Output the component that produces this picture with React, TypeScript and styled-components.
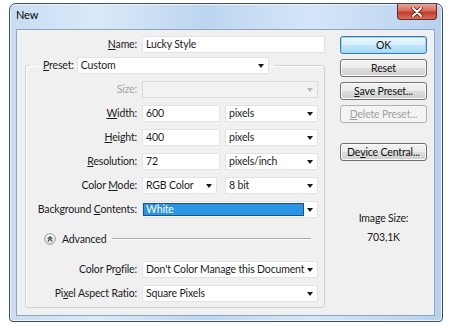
import React from 'react';
import styled, { createGlobalStyle } from 'styled-components';

const GlobalStyle = createGlobalStyle`
  html, body { margin: 0; padding: 0; background: #ffffff; }
  body {
    font-family: Lato, "Noto Sans", sans-serif;
    font-size: 10.5px;
    letter-spacing: -0.15px;
    color: #1b1b1b;
  }
`;

const Window = styled.div`
  margin: 3px 0 0 9px;
  width: 434px;
  height: 319px;
  box-sizing: border-box;
  border: 1px solid #3e4d5e;
  border-radius: 7px 7px 4px 4px;
  padding: 0 7px 5px 6px;
  display: flex;
  flex-direction: column;
  background: linear-gradient(90deg, #c8ddf2 0%, #d9e9f8 20%, #bcd6f0 45%, #d4e6f7 70%, #b6d1ee 100%);
  box-shadow: inset 0 0 0 1px #eef5fc;
`;

const TitleBar = styled.div`
  height: 25px;
  display: flex;
  align-items: flex-start;
  justify-content: space-between;
`;

const Title = styled.span`
  font-size: 11px;
  line-height: 22px;
  color: #000;
`;

const CloseButton = styled.div`
  width: 38px;
  height: 15px;
  margin-right: -2px;
  display: flex;
  align-items: center;
  justify-content: center;
  border: 1px solid #6e2a20;
  border-top: none;
  border-radius: 0 0 4px 4px;
  background: linear-gradient(180deg, #e9a597 0%, #d86c5a 45%, #c23b27 55%, #d3705c 100%);
`;

const Client = styled.div`
  flex: 1;
  display: flex;
  border: 1px solid #8ba6c2;
  background: #f0f0f0;
  padding-top: 6px;
`;

const LeftPanel = styled.div`
  width: 313px;
  display: flex;
  flex-direction: column;
`;

const NameRow = styled.div`
  display: grid;
  grid-template-columns: 120px 183px;
  column-gap: 5px;
  align-items: center;
`;

const Label = styled.label<{ $disabled?: boolean }>`
  text-align: right;
  white-space: nowrap;
  color: ${(p) => (p.$disabled ? '#a3a3a3' : '#1b1b1b')};
  line-height: 17px;
`;

const TextBox = styled.div`
  height: 17px;
  box-sizing: border-box;
  border: 1px solid #e2e3e5;
  background: #fff;
  padding: 0 3px;
  line-height: 15px;
  white-space: nowrap;
  overflow: hidden;
`;

const SelectBox = styled.div<{ $disabled?: boolean; $w?: number; $span?: boolean }>`
  position: relative;
  height: 17px;
  box-sizing: border-box;
  border: 1px solid ${(p) => (p.$disabled ? '#dadada' : '#e2e3e5')};
  background: ${(p) => (p.$disabled ? '#f3f3f3' : '#fff')};
  padding: 0 13px 0 3px;
  line-height: 15px;
  white-space: nowrap;
  overflow: hidden;
  ${(p) => (p.$w ? `width: ${p.$w}px;` : '')}
  ${(p) => (p.$span ? 'grid-column: 2 / 4;' : '')}

  &::after {
    content: '';
    position: absolute;
    right: 4px;
    top: 6px;
    border-left: 3.5px solid transparent;
    border-right: 3.5px solid transparent;
    border-top: 4px solid ${(p) => (p.$disabled ? '#b9b9b9' : '#1a1a1a')};
  }
`;

const Highlight = styled.div`
  margin: 1px 0 0 -3px;
  height: 13px;
  box-sizing: border-box;
  border: 1px solid #1b5288;
  background: #2a94e5;
  color: #fff;
  padding-left: 2px;
  line-height: 11px;
`;

const Group = styled.fieldset`
  margin: 4px 0 0 8px;
  width: 300px;
  box-sizing: border-box;
  padding: 7px 5px 5px 0;
  border: 1px solid #cdd5dc;
  border-radius: 3px;
  box-shadow: inset 1px 1px 0 #ffffff;
  min-width: 0;
`;

const Legend = styled.legend`
  margin-left: 4px;
  padding: 0 5px 0 13px;
  display: flex;
  align-items: center;
  gap: 3px;
`;

const FormGrid = styled.div<{ $top?: number }>`
  display: grid;
  grid-template-columns: 111px 78px 93px;
  grid-auto-rows: 17px;
  column-gap: 5px;
  row-gap: 7px;
  align-items: center;
  margin-top: ${(p) => p.$top ?? 0}px;
`;

const AdvancedRow = styled.div`
  margin-top: 13px;
  height: 16px;
  padding-left: 18px;
  display: flex;
  align-items: center;
  gap: 6px;
`;

const Rule = styled.div`
  flex: 1;
  margin: 0 8px 0 0;
  height: 0;
  border-top: 1px solid #a9a9a9;
  border-bottom: 1px solid #ffffff;
`;

const RightPanel = styled.div`
  padding-left: 10px;
  display: flex;
  flex-direction: column;
  width: 87px;
`;

const Button = styled.div<{ $default?: boolean; $disabled?: boolean; $top?: number }>`
  height: 18px;
  box-sizing: border-box;
  margin-top: ${(p) => p.$top ?? 5}px;
  border: 1px solid ${(p) => (p.$default ? '#3d7bad' : p.$disabled ? '#adb2b5' : '#707070')};
  border-radius: 3px;
  text-align: center;
  line-height: 16px;
  color: ${(p) => (p.$disabled ? '#a0a0a0' : '#111')};
  background: ${(p) =>
    p.$default
      ? 'linear-gradient(180deg, #eaf6fd 0%, #d9f0fc 50%, #bee6fd 51%, #a7d9f5 100%)'
      : p.$disabled
      ? '#f4f4f4'
      : 'linear-gradient(180deg, #f2f2f2 0%, #ebebeb 50%, #dddddd 51%, #cfcfcf 100%)'};
  box-shadow: inset 0 0 0 1px ${(p) => (p.$default ? '#95d6f8' : p.$disabled ? '#f4f4f4' : '#fbfbfb')};
`;

const InfoText = styled.div<{ $top: number }>`
  margin-top: ${(p) => p.$top}px;
  text-align: center;
  line-height: 13px;
`;

const CloseGlyph = () => (
  <svg width="12" height="10" viewBox="0 0 12 10">
    <path d="M2 1 L10 9 M10 1 L2 9" stroke="#5a1a12" strokeWidth="3.6" strokeLinecap="round" />
    <path d="M2 1 L10 9 M10 1 L2 9" stroke="#ffffff" strokeWidth="2" strokeLinecap="round" />
  </svg>
);

const AdvancedIcon = () => (
  <svg width="12" height="12" viewBox="0 0 12 12">
    <defs>
      <linearGradient id="adv" x1="0" y1="0" x2="0" y2="1">
        <stop offset="0" stopColor="#ffffff" />
        <stop offset="1" stopColor="#dcdcdc" />
      </linearGradient>
    </defs>
    <circle cx="6" cy="6" r="5.3" fill="url(#adv)" stroke="#9a9a9a" strokeWidth="1" />
    <path d="M3.8 6 L6 3.8 L8.2 6 M3.8 8.4 L6 6.2 L8.2 8.4" fill="none" stroke="#333" strokeWidth="1.1" />
  </svg>
);

const App: React.FC = () => {
  return (
    <>
      <GlobalStyle />
      <Window>
        <TitleBar>
          <Title>New</Title>
          <CloseButton>
            <CloseGlyph />
          </CloseButton>
        </TitleBar>
        <Client>
          <LeftPanel>
            <NameRow>
              <Label><u>N</u>ame:</Label>
              <TextBox>Lucky Style</TextBox>
            </NameRow>
            <Group>
              <Legend>
                <Label><u>P</u>reset:</Label>
                <SelectBox $w={192}>Custom</SelectBox>
              </Legend>
              <FormGrid>
                <Label $disabled>Size:</Label>
                <SelectBox $disabled $span />

                <Label><u>W</u>idth:</Label>
                <TextBox>600</TextBox>
                <SelectBox>pixels</SelectBox>

                <Label><u>H</u>eight:</Label>
                <TextBox>400</TextBox>
                <SelectBox>pixels</SelectBox>

                <Label><u>R</u>esolution:</Label>
                <TextBox>72</TextBox>
                <SelectBox>pixels/inch</SelectBox>

                <Label>Color <u>M</u>ode:</Label>
                <SelectBox $w={75}>RGB Color</SelectBox>
                <SelectBox>8 bit</SelectBox>

                <Label>Background <u>C</u>ontents:</Label>
                <SelectBox $span>
                  <Highlight>White</Highlight>
                </SelectBox>
              </FormGrid>
              <AdvancedRow>
                <AdvancedIcon />
                <span>Advanced</span>
                <Rule />
              </AdvancedRow>
              <FormGrid $top={14}>
                <Label>Color Pr<u>o</u>file:</Label>
                <SelectBox $span>Don't Color Manage this Document</SelectBox>

                <Label>Pi<u>x</u>el Aspect Ratio:</Label>
                <SelectBox $span>Square Pixels</SelectBox>
              </FormGrid>
            </Group>
          </LeftPanel>
          <RightPanel>
            <Button $default $top={0}>OK</Button>
            <Button>Reset</Button>
            <Button><u>S</u>ave Preset...</Button>
            <Button $disabled><u>D</u>elete Preset...</Button>
            <Button $top={20}>De<u>v</u>ice Central...</Button>
            <InfoText $top={51}>Image Size:</InfoText>
            <InfoText $top={6}>703,1K</InfoText>
          </RightPanel>
        </Client>
      </Window>
    </>
  );
};

export default App;
